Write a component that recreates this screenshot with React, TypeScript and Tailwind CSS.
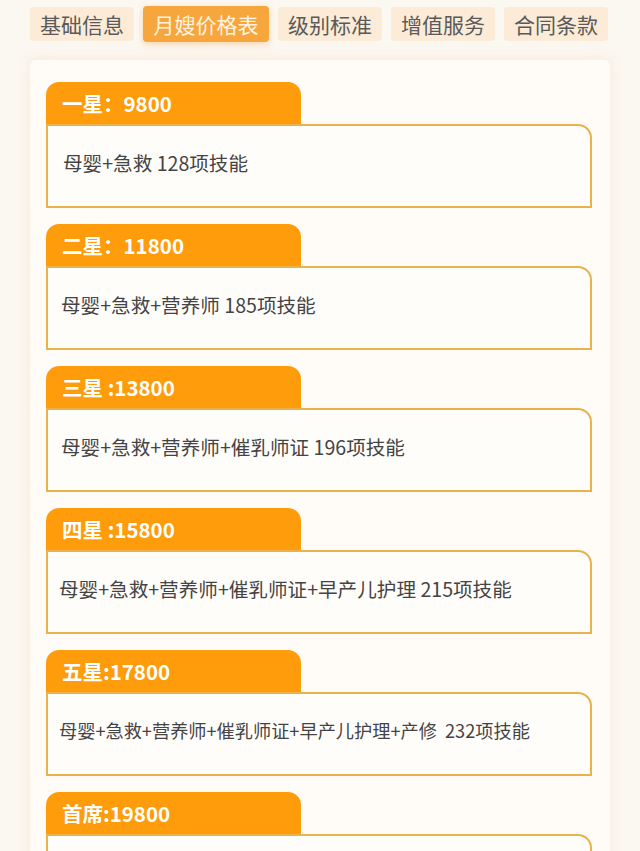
import React from "react";

const tabs = ["基础信息", "月嫂价格表", "级别标准", "增值服务", "合同条款"];

const cards = [
  { title: "一星：9800", desc: "母婴+急救 128项技能", size: "text-[19.6px]", pl: "pl-[15px]" },
  { title: "二星：11800", desc: "母婴+急救+营养师 185项技能", size: "text-[19.6px]", pl: "pl-[13px]" },
  { title: "三星 :13800", desc: "母婴+急救+营养师+催乳师证 196项技能", size: "text-[19.6px]", pl: "pl-[13px]" },
  { title: "四星 :15800", desc: "母婴+急救+营养师+催乳师证+早产儿护理 215项技能", size: "text-[19.6px]", pl: "pl-[11px]" },
  { title: "五星:17800", desc: "母婴+急救+营养师+催乳师证+早产儿护理+产修  232项技能", size: "text-[18.2px]", pl: "pl-[11px]" },
  { title: "首席:19800", desc: "", size: "text-[19px]", pl: "pl-[12px]" },
];

export default function App() {
  return (
    <div
      className="w-[640px] h-[851px] overflow-hidden bg-[#fbf7f1]"
      style={{ fontFamily: '"Noto Sans CJK SC", "Noto Sans", sans-serif' }}
    >
      <div className="flex gap-[9px] pl-[30px] pt-[6px] h-[60px]">
        {tabs.map((t, i) => (
          <div
            key={t}
            className={
              i === 1
                ? "h-[36px] w-[126px] rounded-[4px] bg-[#f6a63c] text-[#fff3e0] text-[21px] leading-[36px] text-center shadow-[0_2px_6px_rgba(240,150,40,0.35)]"
                : "h-[34px] mt-[1px] w-[104px] rounded-[4px] bg-[#fcebd6] text-[#5a5a5a] text-[21px] leading-[34px] text-center"
            }
          >
            {t}
          </div>
        ))}
      </div>
      <div className="mx-[30px] bg-[#fffcf8] rounded-[6px] shadow-[0_0_14px_rgba(240,205,160,0.3)] pt-[22px] px-[16px] flex flex-col gap-[16px] h-[820px]">
        {cards.map((c) => (
          <div key={c.title} className="flex flex-col shrink-0">
            <div className="w-[255px] h-[42px] rounded-t-[13px] bg-[#fe9c0c] text-white font-bold text-[20.5px] leading-[42px] pl-[16px]">
              {c.title}
            </div>
            <div
              className={`w-[546px] h-[84px] border-2 border-[#e9b24c] rounded-tr-[14px] bg-[#fffdfa] flex items-center pb-[7px] ${c.pl} ${c.size} text-[#444] whitespace-pre`}
            >
              {c.desc}
            </div>
          </div>
        ))}
      </div>
    </div>
  );
}
